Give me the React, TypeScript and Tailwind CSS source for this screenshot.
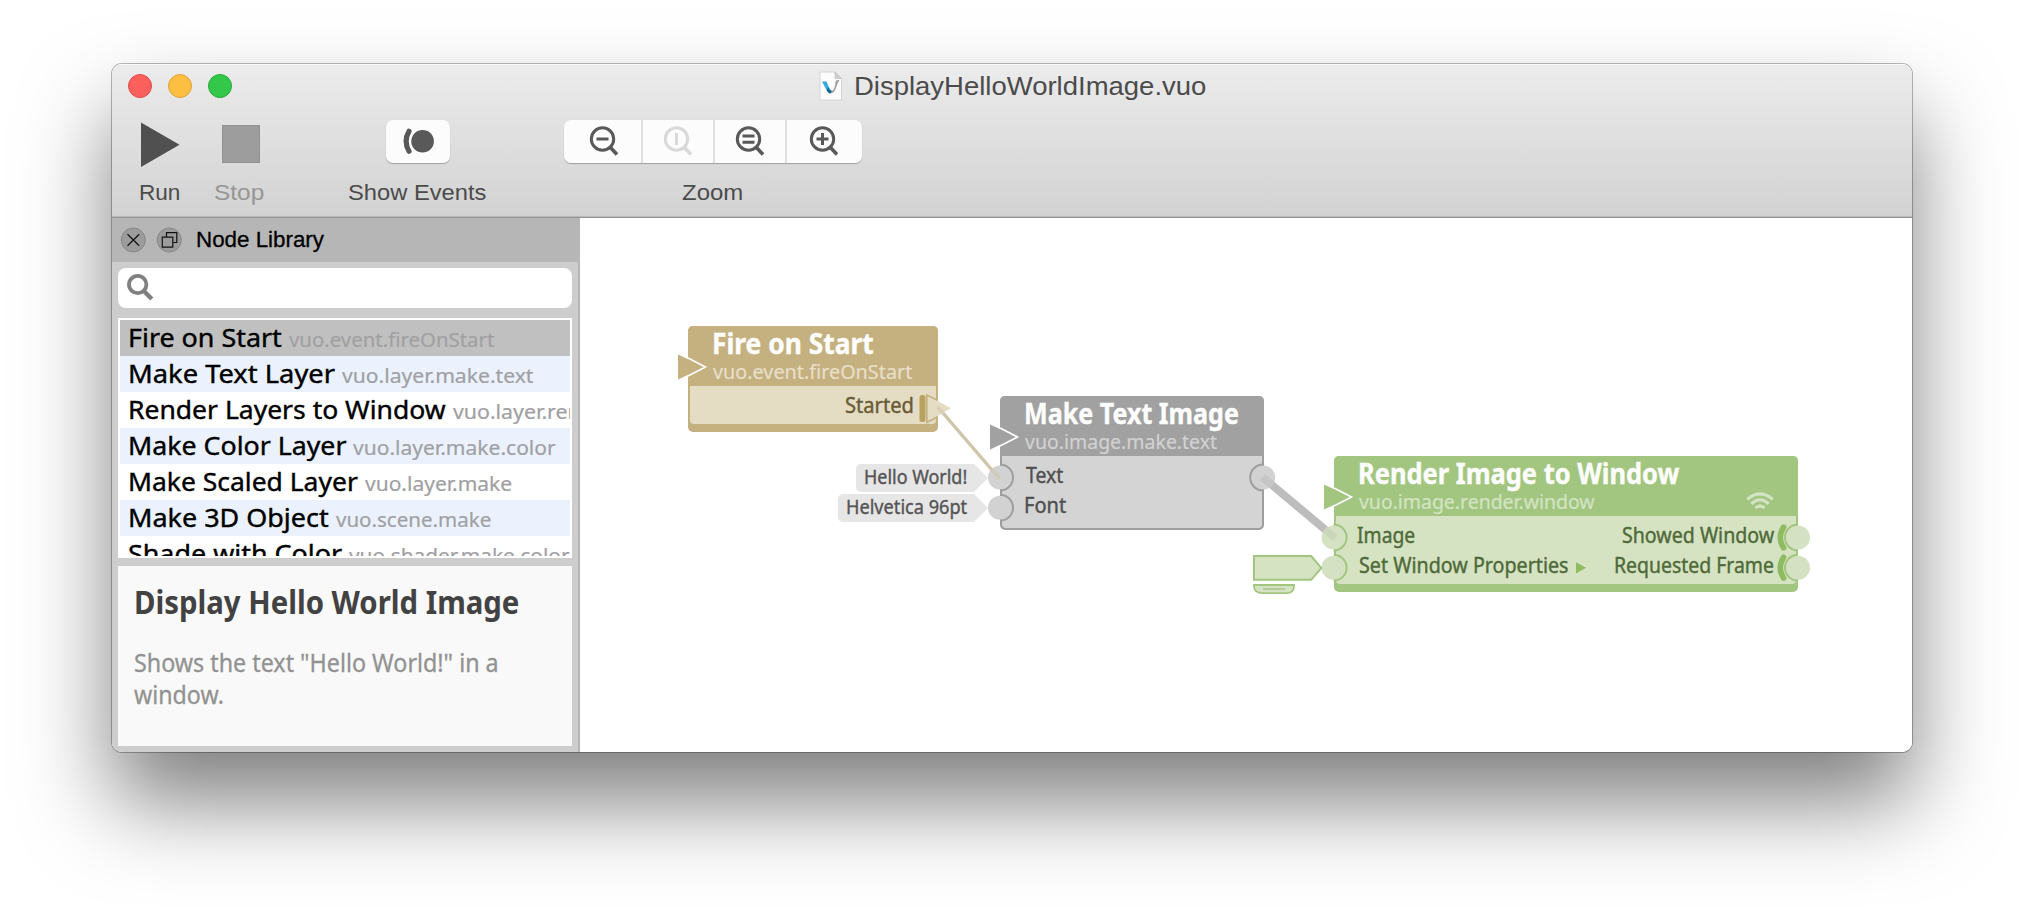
import React, { useLayoutEffect, useRef, useState } from "react";

const HELV = "font-['Liberation_Sans',Arial,sans-serif]";
const NOTO = "font-['Noto_Sans','Open_Sans',sans-serif]";

/* A single line of text, condensed or widened to fill the width of its box. */
function Fit({ className, children }: { className: string; children: string }) {
  const box = useRef<HTMLSpanElement>(null);
  const text = useRef<HTMLSpanElement>(null);
  const [scale, setScale] = useState(1);
  useLayoutEffect(() => {
    if (box.current && text.current) {
      setScale(box.current.offsetWidth / text.current.offsetWidth);
    }
  }, []);
  return (
    <span ref={box} className={`block shrink-0 whitespace-nowrap ${className}`}>
      <span ref={text} className="inline-block origin-left" style={{ transform: `scaleX(${scale})` }}>
        {children}
      </span>
    </span>
  );
}

function DocumentIcon() {
  return (
    <svg width="24" height="30" viewBox="0 0 24 30">
      <path d="M1 1H16L22.5 7.5V29H1Z" fill="#fcfcfc" stroke="#d4d4d4" strokeWidth="1" />
      <path d="M16 1L22.5 7.5H16Z" fill="#d2d2d2" stroke="#b9b9b9" strokeWidth=".6" />
      <path d="M3 10.5L7.5 10.5Q9.5 16 12 19.5L14.5 20L11 22.5Q9 22 7.5 19Z" fill="#35a9e0" />
      <path d="M9 16Q10 19 13 20L11.5 22.5Q9 22 7.8 19.5Z" fill="#17678f" />
      <path d="M12.5 20.5Q16 18.5 16.5 11Q16.5 8.5 20.5 9Q18.5 12 17.3 16Q15.5 22 11.5 22.6Z" fill="#a2a2a2" />
    </svg>
  );
}

function Magnifier({ sign, muted }: { sign: string; muted?: boolean }) {
  return (
    <svg width="32" height="32" viewBox="0 0 32 32" fill="none" stroke={muted ? "#d9d9d9" : "#595959"} strokeWidth="3">
      <circle cx="14.5" cy="13" r="11.2" />
      <path d="M21.5 20.5L29 28.5" strokeWidth="3.6" />
      <path d={sign} />
    </svg>
  );
}

const ZOOMS = [
  { sign: "M8.5 13H20.5", box: "w-[77px] pl-[24px]" },
  { sign: "M14.5 7V19", box: "w-[70px] pl-[19px]", muted: true },
  { sign: "M8.5 10H20.5M8.5 16.3H20.5", box: "w-[70px] pl-[19px]" },
  { sign: "M8.5 13H20.5M14.5 7V19", box: "w-[75px] pl-[21px]" },
];

function Header() {
  return (
    <header
      className={`h-[154px] shrink-0 border-b border-[#929292] bg-linear-to-b from-[#ececec] to-[#d2d2d2] text-[#4b4b4b] shadow-[inset_0_1px_0_#f8f8f8,inset_0_-1px_0_#bababa] ${HELV}`}
    >
      <div className="grid h-[43px] grid-cols-[1fr_auto_1fr] items-center">
        <div className="flex gap-4 pl-4">
          <i className="size-6 rounded-full border border-[#e04b48] bg-[#fc605c]" />
          <i className="size-6 rounded-full border border-[#dfa23a] bg-[#fdbf42]" />
          <i className="size-6 rounded-full border border-[#25a838] bg-[#34c84a]" />
        </div>
        <div className="flex items-center gap-[11px]">
          <DocumentIcon />
          <Fit className="w-[352px] pt-px text-[26px] leading-[42px]">DisplayHelloWorldImage.vuo</Fit>
        </div>
      </div>
      <div className="flex pl-2 text-[22px] leading-[22px]">
        <div className="flex w-20 flex-col items-center">
          <div className="flex h-[75px] items-start pt-[15px]">
            <svg width="40" height="46" viewBox="0 0 40 46">
              <path d="M1 .5L39.5 22.7L1 45Z" fill="#505050" />
            </svg>
          </div>
          <Fit className="-ml-[2px] w-[41px]">Run</Fit>
        </div>
        <div className="flex w-20 flex-col items-center text-[#969696]">
          <div className="h-[75px] pt-[18px] pl-px">
            <div className="size-[38px] border border-[#919191] bg-[#9d9d9d]" />
          </div>
          <Fit className="-ml-[2px] w-[50px]">Stop</Fit>
        </div>
        <div className="ml-[58px] flex w-40 flex-col items-center">
          <div className="h-[75px] pt-[12.5px]">
            <div className="flex h-[43px] w-16 items-center justify-center rounded-[7px] bg-[#fcfcfc] shadow-[0_1px_1px_rgba(0,0,0,.28)]">
              <svg className="-mt-px -ml-[3px]" width="34" height="28" viewBox="0 0 34 28">
                <circle cx="22.6" cy="14.2" r="11.3" fill="#595959" />
                <path d="M9 4.2Q3.2 14.2 9 24.2" fill="none" stroke="#595959" strokeWidth="5.2" strokeLinecap="round" />
              </svg>
            </div>
          </div>
          <Fit className="-ml-[2px] w-[138px]">Show Events</Fit>
        </div>
        <div className="ml-[66px] flex flex-col items-center">
          <div className="h-[75px] pt-[12.5px]">
            <div className="flex h-[43px] gap-[2px] overflow-hidden rounded-[7px] bg-[#e0e0e0] shadow-[0_1px_1px_rgba(0,0,0,.28)]">
              {ZOOMS.map((z) => (
                <div key={z.sign} className={`bg-[#fcfcfc] pt-[6px] ${z.box}`}>
                  <Magnifier sign={z.sign} muted={z.muted} />
                </div>
              ))}
            </div>
          </div>
          <Fit className="-ml-[2px] w-[61px]">Zoom</Fit>
        </div>
      </div>
    </header>
  );
}

const LIBRARY = [
  { name: "Fire on Start", w: "w-[154px]", id: "vuo.event.fireOnStart", iw: "w-[205px]", bg: "bg-[#c0c0c0]" },
  { name: "Make Text Layer", w: "w-[207px]", id: "vuo.layer.make.text", iw: "w-[191px]", bg: "bg-[#ebf2fe]" },
  { name: "Render Layers to Window", w: "w-[318px]", id: "vuo.layer.render.window", iw: "w-[242px]", bg: "bg-white" },
  { name: "Make Color Layer", w: "w-[218px]", id: "vuo.layer.make.color", iw: "w-[203px]", bg: "bg-[#ebf2fe]" },
  { name: "Make Scaled Layer", w: "w-[230px]", id: "vuo.layer.make", iw: "w-[147px]", bg: "bg-white" },
  { name: "Make 3D Object", w: "w-[201px]", id: "vuo.scene.make", iw: "w-[155px]", bg: "bg-[#ebf2fe]" },
  { name: "Shade with Color", w: "w-[214px]", id: "vuo.shader.make.color", iw: "w-[221px]", bg: "bg-white" },
];

function Sidebar() {
  return (
    <aside className="flex w-[468px] shrink-0 flex-col bg-[#cdcdcd]">
      <div className={`flex h-[44px] shrink-0 items-center bg-[#b6b6b6] pl-2 text-[22px] leading-[44px] text-black ${HELV}`}>
        <svg className="-mt-px" width="76" height="26" viewBox="0 0 76 26" fill="none">
          <g fill="#9c9c9c" stroke="#868686">
            <circle cx="13.3" cy="13" r="12" />
            <circle cx="49.3" cy="13" r="12" />
          </g>
          <g stroke="#111" strokeWidth="1.2">
            <path d="M7.5 7.2L19.2 18.8M19.2 7.2L7.5 18.8" />
            <path d="M46.5 9.5V5.7H56.8V15.5H53M42.3 10.2H52.8V20.2H42.3Z" />
          </g>
        </svg>
        <Fit className="w-[128px] [-webkit-text-stroke:0.3px]">Node Library</Fit>
      </div>
      <div className="flex min-h-0 flex-1 flex-col border-r-2 border-[#b5b5b5] px-[6px] pt-[6px] pb-[6px]">
        <div className="flex h-[40px] shrink-0 items-center rounded-lg bg-white pl-2">
          <svg width="30" height="30" viewBox="0 0 30 30" fill="none" stroke="#808080">
            <circle cx="11.7" cy="11.5" r="8.7" strokeWidth="3.8" />
            <path d="M17.8 18L25.8 26" strokeWidth="4.4" />
          </svg>
        </div>
        <div className="mt-[10px] h-[240px] shrink-0 border-2 border-white bg-white">
          <div className="h-full overflow-hidden">
            {LIBRARY.map((l) => (
              <div key={l.id} className={`flex h-9 items-baseline gap-[7px] pl-2 leading-[34px] ${NOTO} ${l.bg}`}>
                <Fit className={`text-[26px] text-black [-webkit-text-stroke:0.4px] ${l.w}`}>{l.name}</Fit>
                <Fit className={`text-[20px] text-[#a0a0a3] [-webkit-text-stroke:0.2px] ${l.iw}`}>{l.id}</Fit>
              </div>
            ))}
          </div>
        </div>
        <div className={`mt-2 flex-1 bg-[#f9f9f9] pl-[16px] ${NOTO}`}>
          <Fit className="mt-[16px] w-[385px] text-[32px] leading-[40px] font-bold text-[#424242]">Display Hello World Image</Fit>
          <div className="mt-[24px] text-[25px] leading-[32px] text-[#929292] [-webkit-text-stroke:0.3px]">
            <Fit className="w-[365px]">{'Shows the text "Hello World!" in a'}</Fit>
            <Fit className="w-[90px]">window.</Fit>
          </div>
        </div>
      </div>
    </aside>
  );
}

type NodeProps = {
  title: string;
  id: string;
  frame: string;
  head: string;
  titleW: string;
  idStyle: string;
  body: string;
  children: React.ReactNode;
};

function GraphNode({ title, id, frame, head, titleW, idStyle, body, children }: NodeProps) {
  return (
    <section className={`absolute flex flex-col overflow-hidden rounded-[5px] ${NOTO} ${frame}`}>
      <div className={`h-[60px] shrink-0 pl-[24px] ${head}`}>
        <Fit className={`text-[28px] leading-[34px] font-bold text-[#fdfdfd] [-webkit-text-stroke:0.4px] ${titleW}`}>{title}</Fit>
        <Fit className={`ml-px text-[20.5px] leading-[22px] [-webkit-text-stroke:0.2px] ${idStyle}`}>{id}</Fit>
      </div>
      <div className={`mx-[2px] flex-1 pt-[4px] text-[21px] leading-[30px] [-webkit-text-stroke:0.4px] ${body}`}>{children}</div>
    </section>
  );
}

/* Ports, cables and constant tags, in canvas coordinates. */
function Wiring() {
  const inlet = (x: number, y: number, fill: string) => (
    <g>
      <path d={`M${x} ${y - 12.5}L${x + 27} ${y}L${x} ${y + 12.5}Z`} fill={fill} />
      <path d={`M${x + 10} ${y - 9}L${x + 27.5} ${y}L${x + 10} ${y + 9}`} fill="none" stroke="#fff" strokeWidth="1.6" />
    </g>
  );
  const port = (x: number, y: number, fill: string, ring: string, right?: boolean) => (
    <g>
      <circle cx={x} cy={y} r="12" fill={fill} />
      <path
        d={right ? `M${x} ${y - 13}A13 13 0 0 0 ${x} ${y + 13}` : `M${x} ${y - 13}A13 13 0 0 1 ${x} ${y + 13}`}
        fill="none"
        stroke={ring}
        strokeWidth="2"
      />
    </g>
  );
  const trigger = (y: number) => (
    <path d={`M1203.6 ${y - 10.4}Q1196.8 ${y} 1203.6 ${y + 10.4}`} fill="none" stroke="#8fbb61" strokeWidth="5.6" strokeLinecap="round" />
  );
  return (
    <svg className="absolute inset-0" width="1332" height="534" viewBox="0 0 1332 534">
      {inlet(98, 149, "#c5b180")}
      {inlet(410, 219, "#a1a1a1")}
      {inlet(744, 279, "#a2c680")}

      <rect x="339.5" y="177" width="6" height="27" rx="2.5" fill="#b9a25d" />
      <path d="M347 177L371 190.3L347 204Z" fill="#e5dcc4" />
      <path d="M357 182L346.8 177V204.4L357 199.2" fill="none" stroke="#c5b180" strokeWidth="1.6" />

      {port(420, 259.5, "#d2d2d2", "#9e9e9e")}
      {port(420, 289.7, "#d2d2d2", "#9e9e9e")}
      {port(683.2, 259.5, "#d2d2d2", "#9e9e9e", true)}
      {port(753.6, 319.5, "#d4e2c3", "#a2c680")}
      {port(753.6, 349.7, "#d4e2c3", "#a2c680")}
      {trigger(319.5)}
      {trigger(349.7)}
      {port(1218, 319.5, "#d4e2c3", "#a2c680", true)}
      {port(1218, 349.7, "#d4e2c3", "#a2c680", true)}

      <path d="M363 195L411.5 251.5" stroke="#cfc6a9" strokeWidth="3.4" />
      <path d="M358 189L363 195M411.5 251.5L420 260.5" stroke="#cfc6a9" strokeWidth="3.4" opacity=".6" />
      <path d="M692 267L745 311.5" stroke="#bdbdbd" strokeWidth="8" />
      <path d="M682.5 259L692 267" stroke="#c6c6c6" strokeWidth="8" />
      <path d="M745 311.5L755.5 320" stroke="#c9d6ba" strokeWidth="8" />

      <path d="M674 338H731.2L741.4 350L731.2 361.8H674Z" fill="#d5e3c3" stroke="#a2c680" strokeWidth="2" />
      <path d="M674 367H714V368.5Q713.4 374.8 707.5 375.1H681.5Q674.5 374.6 674 368.5Z" fill="#d5e3c3" stroke="#a2c680" strokeWidth="1.8" />
      <path d="M683 371H705" stroke="#b5cd9e" strokeWidth="2" />
      <path d="M996 344.2L1006 349.8L996 355.5Z" fill="#8fbb61" />

      <g fill="none" stroke="#d3e4c4" strokeWidth="3">
        <path d="M1167.3 281.3Q1180 270.5 1192.7 281.3" />
        <path d="M1171.3 285.8Q1180 277.8 1188.7 285.8" />
        <path d="M1175.5 290Q1180 285.6 1184.5 290" />
      </g>
    </svg>
  );
}

function Tag({ place, fit, children }: { place: string; fit: string; children: string }) {
  return (
    <div
      className={`absolute h-[28px] rounded-l-[5px] bg-[#e6e6e6] text-[19.5px] leading-[26px] text-[#555] [-webkit-text-stroke:0.4px] [clip-path:polygon(0_0,calc(100%-14px)_0,100%_50%,calc(100%-14px)_100%,0_100%)] ${NOTO} ${place}`}
    >
      <Fit className={`ml-[8px] ${fit}`}>{children}</Fit>
    </div>
  );
}

function Canvas() {
  return (
    <main className="relative flex-1 overflow-hidden bg-white">
      <Tag place="left-[276px] top-[246px] w-[132px]" fit="w-[103px]">Hello World!</Tag>
      <Tag place="left-[258px] top-[276px] w-[150px]" fit="w-[121px]">Helvetica 96pt</Tag>

      <GraphNode
        title="Fire on Start"
        id="vuo.event.fireOnStart"
        frame="left-[108px] top-[108px] h-[106px] w-[250px] bg-[#c5b180]"
        head="bg-[#c5b180]"
        titleW="w-[162px]"
        idStyle="w-[199px] text-[#e8dfc9]"
        body="mb-[8px] rounded-b-[4px] bg-[#e5dcc4] text-[#685b36]"
      >
        <div className="flex justify-end pr-[22px]">
          <Fit className="w-[69px]">Started</Fit>
        </div>
      </GraphNode>

      <GraphNode
        title="Make Text Image"
        id="vuo.image.make.text"
        frame="left-[420px] top-[178px] h-[134px] w-[264px] bg-[#9e9e9e]"
        head="bg-[#a1a1a1]"
        titleW="w-[215px]"
        idStyle="w-[192px] text-[#d2d2d2]"
        body="mb-[2px] rounded-b-[4px] bg-[#d4d4d4] pl-[23px] text-[#4f4f4f]"
      >
        <Fit className="ml-px w-[37px]">Text</Fit>
        <Fit className="-ml-px w-[42px]">Font</Fit>
      </GraphNode>

      <GraphNode
        title="Render Image to Window"
        id="vuo.image.render.window"
        frame="left-[754px] top-[238px] h-[136px] w-[464px] bg-[#a2c680]"
        head="bg-[#a2c680]"
        titleW="w-[321px]"
        idStyle="w-[236px] text-[#d3e4c4]"
        body="mb-[8px] rounded-b-[4px] bg-[#d5e3c3] pl-[21px] pr-[22px] text-[#4f6a38]"
      >
        <div className="flex justify-between">
          <Fit className="w-[58px]">Image</Fit>
          <Fit className="w-[152px]">Showed Window</Fit>
        </div>
        <div className="flex justify-between">
          <Fit className="ml-[2px] w-[210px]">Set Window Properties</Fit>
          <Fit className="w-[160px]">Requested Frame</Fit>
        </div>
      </GraphNode>

      <Wiring />
    </main>
  );
}

export default function App() {
  return (
    <div className="h-[912px] w-[2024px] overflow-hidden bg-white px-[112px] pt-[64px]">
      <div className="rounded-[10px] shadow-[0_0_0_1px_rgba(0,0,0,.28),0_50px_88px_rgba(0,0,0,.5)]">
        <div className="flex h-[688px] w-[1800px] flex-col overflow-hidden rounded-[10px] bg-white">
          <Header />
          <div className="flex min-h-0 flex-1">
            <Sidebar />
            <Canvas />
          </div>
        </div>
      </div>
    </div>
  );
}
